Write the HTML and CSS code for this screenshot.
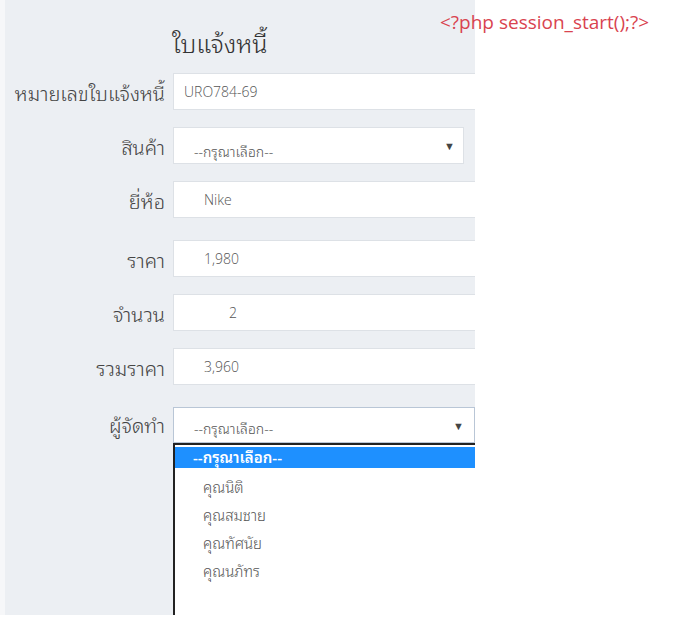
FILE: index.html
```html
<!DOCTYPE html>
<html lang="th">
<head>
  <meta charset="UTF-8">
  <title>ใบแจ้งหนี้</title>
  <meta name="viewport" content="width=device-width, initial-scale=1.0">
  <link rel="stylesheet" href="styles.css">
</head>
<body>
  <div class="panel">
    <h1>ใบแจ้งหนี้</h1>
    <form id="invoice-form">
      <div class="form-group">
        <label>หมายเลขใบแจ้งหนี้</label>
        <input type="text" class="field" value="URO784-69">
      </div>
      <div class="form-group">
        <label>สินค้า</label>
        <div class="select short">--กรุณาเลือก--<span class="arrow">▼</span></div>
      </div>
      <div class="form-group gap-lg">
        <label>ยี่ห้อ</label>
        <input type="text" class="field pad-md" value="Nike">
      </div>
      <div class="form-group">
        <label>ราคา</label>
        <input type="text" class="field pad-md" value="1,980">
      </div>
      <div class="form-group">
        <label>จำนวน</label>
        <input type="text" class="field pad-lg" value="2">
      </div>
      <div class="form-group gap-lg">
        <label>รวมราคา</label>
        <input type="text" class="field pad-md" value="3,960">
      </div>
      <div class="form-group top">
        <label>ผู้จัดทำ</label>
        <div class="dropdown">
          <div class="select open">--กรุณาเลือก--<span class="arrow">▼</span></div>
          <ul class="options">
            <li class="selected">--กรุณาเลือก--</li>
            <li>คุณนิติ</li>
            <li>คุณสมชาย</li>
            <li>คุณทัศนัย</li>
            <li>คุณนภัทร</li>
          </ul>
        </div>
      </div>
    </form>
  </div>
  <div class="php">&lt;?php session_start();?&gt;</div>
</body>
</html>
```

FILE: styles.css
```css
body { margin: 0; background: #fff; font-family: "Open Sans", "Noto Sans Thai Looped", "Loma", "Waree", "Garuda", "Noto Sans Thai", sans-serif; font-weight: 300; position: relative; }
.panel { width: 475px; height: 615px; background: #eceff3; overflow: hidden; border-left: 5px solid #f6f7f9; box-sizing: border-box; }
h1 { margin: 0; padding: 22px 0 0 167px; box-sizing: border-box; height: 73px; font-size: 25px; font-weight: 300; color: #333; line-height: 42px; }
.form-group { display: flex; align-items: center; margin-bottom: 17px; }
.form-group.gap-lg { margin-bottom: 22px; }
.form-group.top { align-items: flex-start; }
.form-group.top label { padding-top: 1px; }
label { width: 160px; margin-right: 8px; text-align: right; font-size: 20px; color: #444; flex-shrink: 0; white-space: nowrap; }
.field { width: 320px; height: 37px; box-sizing: border-box; border: 1px solid #dde1e6; background: #fff; padding: 0 10px; font: 300 14px "Open Sans", "Noto Sans", sans-serif; color: #555; flex-shrink: 0; }
.field.pad-md { padding-left: 30px; }
.field.pad-lg { padding-left: 55px; }
.select { position: relative; width: 320px; height: 37px; box-sizing: border-box; border: 1px solid #dde1e6; background: #fff; padding: 8px 20px 0; font-size: 14px; color: #555; flex-shrink: 0; }
.select.short { width: 291px; padding-top: 11px; }
.arrow { position: absolute; right: 8px; top: 10px; font-size: 11px; color: #444; }
.select.open { width: 302px; height: 36px; border-color: #b9c6d6; }
.select.open .arrow { right: 10px; }
.dropdown { width: 302px; }
.options { list-style: none; margin: 0; padding: 2px 0 40px; background: #fff; border-top: 2px solid #222; border-left: 2px solid #222; font-size: 15px; color: #555; height: 130px; }
.options li { padding: 1px 0 3px 28px; }
.options li.selected { background: #1e90ff; color: #fff; padding: 0 0 0 18px; height: 21px; line-height: 21px; margin-bottom: 5px; font-weight: 600; }
.php { position: absolute; left: 440px; top: 9px; font-size: 19px; font-weight: 400; color: #d9434f; }
```
